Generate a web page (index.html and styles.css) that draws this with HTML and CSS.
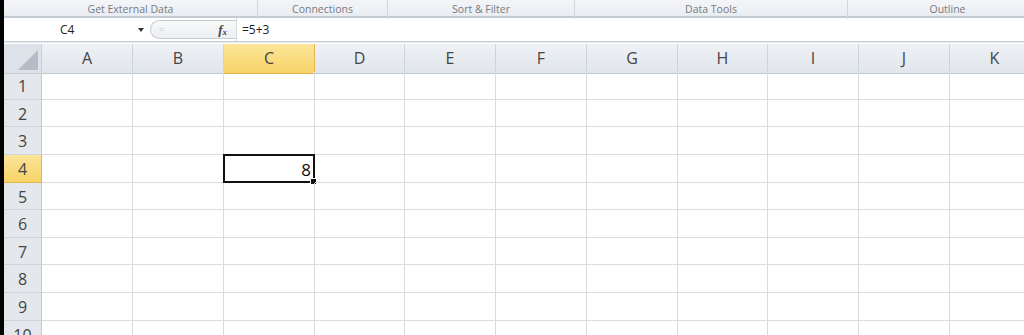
FILE: index.html
```html
<!DOCTYPE html>
<html lang="en">
<head>
    <meta charset="UTF-8">
    <title>Excel - Data tab</title>
    <link rel="stylesheet" href="styles.css">
</head>
<body>
    <div class="app">
        <div class="ribbon-groups">
            <div class="group g1">Get External Data</div>
            <div class="group g2">Connections</div>
            <div class="group g3">Sort &amp; Filter</div>
            <div class="group g4">Data Tools</div>
            <div class="group g5">Outline</div>
        </div>

        <div class="formula-bar">
            <div class="name-box">
                <span class="name-text">C4</span>
                <span class="name-arrow"></span>
            </div>
            <div class="fx-pill">
                <span class="pill-mark">=</span>
                <span class="fx">f<sub>x</sub></span>
            </div>
            <div class="formula-text">=5+3</div>
        </div>

        <div class="sheet">
            <div class="corner"><span class="corner-tri"></span></div>
            <div class="col-head">A</div>
            <div class="col-head">B</div>
            <div class="col-head active">C</div>
            <div class="col-head">D</div>
            <div class="col-head">E</div>
            <div class="col-head">F</div>
            <div class="col-head">G</div>
            <div class="col-head">H</div>
            <div class="col-head">I</div>
            <div class="col-head">J</div>
            <div class="col-head">K</div>
        </div>
        <div class="grid" id="grid">
            <!-- rows -->
        </div>
    </div>

    <script src="script.js"></script>
</body>
</html>
```

FILE: script.js
```js
var grid = document.getElementById('grid');
var cols = ['A', 'B', 'C', 'D', 'E', 'F', 'G', 'H', 'I', 'J', 'K'];

for (var r = 1; r <= 10; r++) {
    var head = document.createElement('div');
    head.className = 'row-head' + (r === 4 ? ' active' : '');
    head.textContent = r;
    grid.appendChild(head);

    for (var c = 0; c < cols.length; c++) {
        var cell = document.createElement('div');
        cell.className = 'cell';
        if (r === 4 && cols[c] === 'C') {
            cell.className = 'cell selected';
            cell.innerHTML = '8<span class="fill-handle"></span>';
        }
        grid.appendChild(cell);
    }
}
```

FILE: styles.css
```css
body {
    margin: 0;
    background-color: #000;
    font-family: 'Open Sans', 'Liberation Sans', sans-serif;
    overflow: hidden;
}
.app {
    margin-left: 4px;
    background-color: #fff;
    height: 335px;
    overflow: hidden;
}
.ribbon-groups {
    display: grid;
    grid-template-columns: 254px 130px 187px 273px 200px;
    height: 16px;
    background: linear-gradient(#f3f5f8, #e9edf2);
    border-bottom: 2px solid #c5cbd3;
}
.group {
    font-size: 10.5px;
    color: #777b81;
    text-align: center;
    line-height: 19px;
    border-right: 1px solid #d3d8de;
    white-space: nowrap;
}
.formula-bar {
    display: flex;
    align-items: center;
    height: 23px;
    background-color: #fff;
    border-bottom: 1px solid #c9ced5;
    box-shadow: 0 1px 0 #e6e9ed;
    margin-bottom: 2px;
}
.name-box {
    width: 140px;
    display: flex;
    align-items: center;
    position: relative;
    height: 100%;
}
.name-text {
    margin-left: 56px;
    font-size: 12px;
    color: #222;
}
.name-arrow {
    position: absolute;
    left: 134px;
    top: 10px;
    border-left: 3.5px solid transparent;
    border-right: 3.5px solid transparent;
    border-top: 4px solid #333;
}
.fx-pill {
    width: 86px;
    height: 19px;
    margin-left: 6px;
    border: 1px solid #c6cbd2;
    border-right: none;
    border-radius: 10px 0 0 10px;
    background: linear-gradient(#f7f8fa, #eceff3);
    display: flex;
    align-items: center;
    justify-content: space-between;
    box-sizing: border-box;
}
.pill-mark {
    margin-left: 8px;
    font-size: 9px;
    color: #c5c9ce;
}
.fx {
    font-family: 'Liberation Serif', serif;
    font-style: italic;
    font-weight: bold;
    font-size: 13px;
    color: #444;
    margin-right: 9px;
}
.fx sub {
    font-size: 9px;
    vertical-align: -1px;
}
.formula-text {
    height: 100%;
    border-left: 1px solid #d6dae0;
    padding-left: 5px;
    font-size: 12px;
    line-height: 23px;
    color: #222;
    flex: 1;
}
.sheet {
    display: grid;
    grid-template-columns: 38px 91px 91px 91px 90px 91px 91px 91px 90px 91px 91px 90px;
    height: 28px;
}
.corner {
    background-color: #dde2e8;
    border-right: 1px solid #c9cfd6;
    border-bottom: 1px solid #c9cfd6;
    position: relative;
}
.corner-tri {
    position: absolute;
    right: 3px;
    bottom: 3px;
    width: 0;
    height: 0;
    border-left: 20px solid transparent;
    border-bottom: 20px solid #b5bcc6;
}
.col-head {
    background: linear-gradient(#eef1f5, #e1e6ec);
    border-right: 1px solid #cdd3da;
    border-bottom: 1px solid #c3c9d1;
    text-align: center;
    font-size: 16px;
    line-height: 29px;
    color: #444;
}
.col-head.active,
.row-head.active {
    background: linear-gradient(#fbe59a, #f8d468);
    border-color: #e2b74e;
}
.grid {
    display: grid;
    grid-template-columns: 38px 91px 91px 91px 90px 91px 91px 91px 90px 91px 91px 90px;
    grid-template-rows: 28px 27px 28px 28px 27px 28px 27px 28px 28px 28px;
}
.row-head {
    background-color: #e4e8ed;
    border-right: 1px solid #c3c9d1;
    border-bottom: 1px solid #cdd3da;
    text-align: center;
    font-size: 16px;
    line-height: 28px;
    color: #444;
}
.cell {
    border-right: 1px solid #dadcdd;
    border-bottom: 1px solid #dadcdd;
    position: relative;
}
.cell.selected {
    border: 2px solid #111;
    margin: -1px 0 0 -1px;
    text-align: right;
    font-size: 17px;
    line-height: 27px;
    padding-right: 2px;
    color: #111;
}
.fill-handle {
    position: absolute;
    right: -4px;
    bottom: -4px;
    width: 5px;
    height: 5px;
    background-color: #111;
    border: 1px solid #fff;
}
```
